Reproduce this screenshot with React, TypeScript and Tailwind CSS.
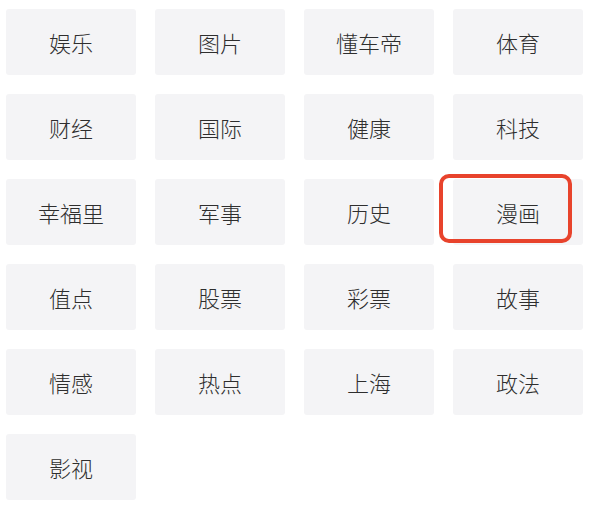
const channels = [
  "娱乐", "图片", "懂车帝", "体育",
  "财经", "国际", "健康", "科技",
  "幸福里", "军事", "历史", "漫画",
  "值点", "股票", "彩票", "故事",
  "情感", "热点", "上海", "政法",
  "影视",
];

const App = () => {
  return (
    <div
      className="relative w-[590px] h-[524px] bg-white overflow-hidden"
      style={{ fontFamily: '"Noto Sans CJK SC", "Noto Sans", sans-serif' }}
    >
      <div className="grid grid-cols-[repeat(4,130px)] auto-rows-[66px] gap-x-[19px] gap-y-[19px] pl-[6px] pt-[9px]">
        {channels.map((name) => (
          <div
            key={name}
            className="flex items-center justify-center rounded-[3px] bg-[#f4f4f6] text-[22px] font-light text-[#2e2e2e]"
          >
            {name}
          </div>
        ))}
      </div>

      {/* highlight around 漫画 */}
      <div className="absolute left-[439px] top-[174px] w-[133px] h-[69px] rounded-[10px] border-4 border-[#e8432c]" />
    </div>
  );
};

export default App;
